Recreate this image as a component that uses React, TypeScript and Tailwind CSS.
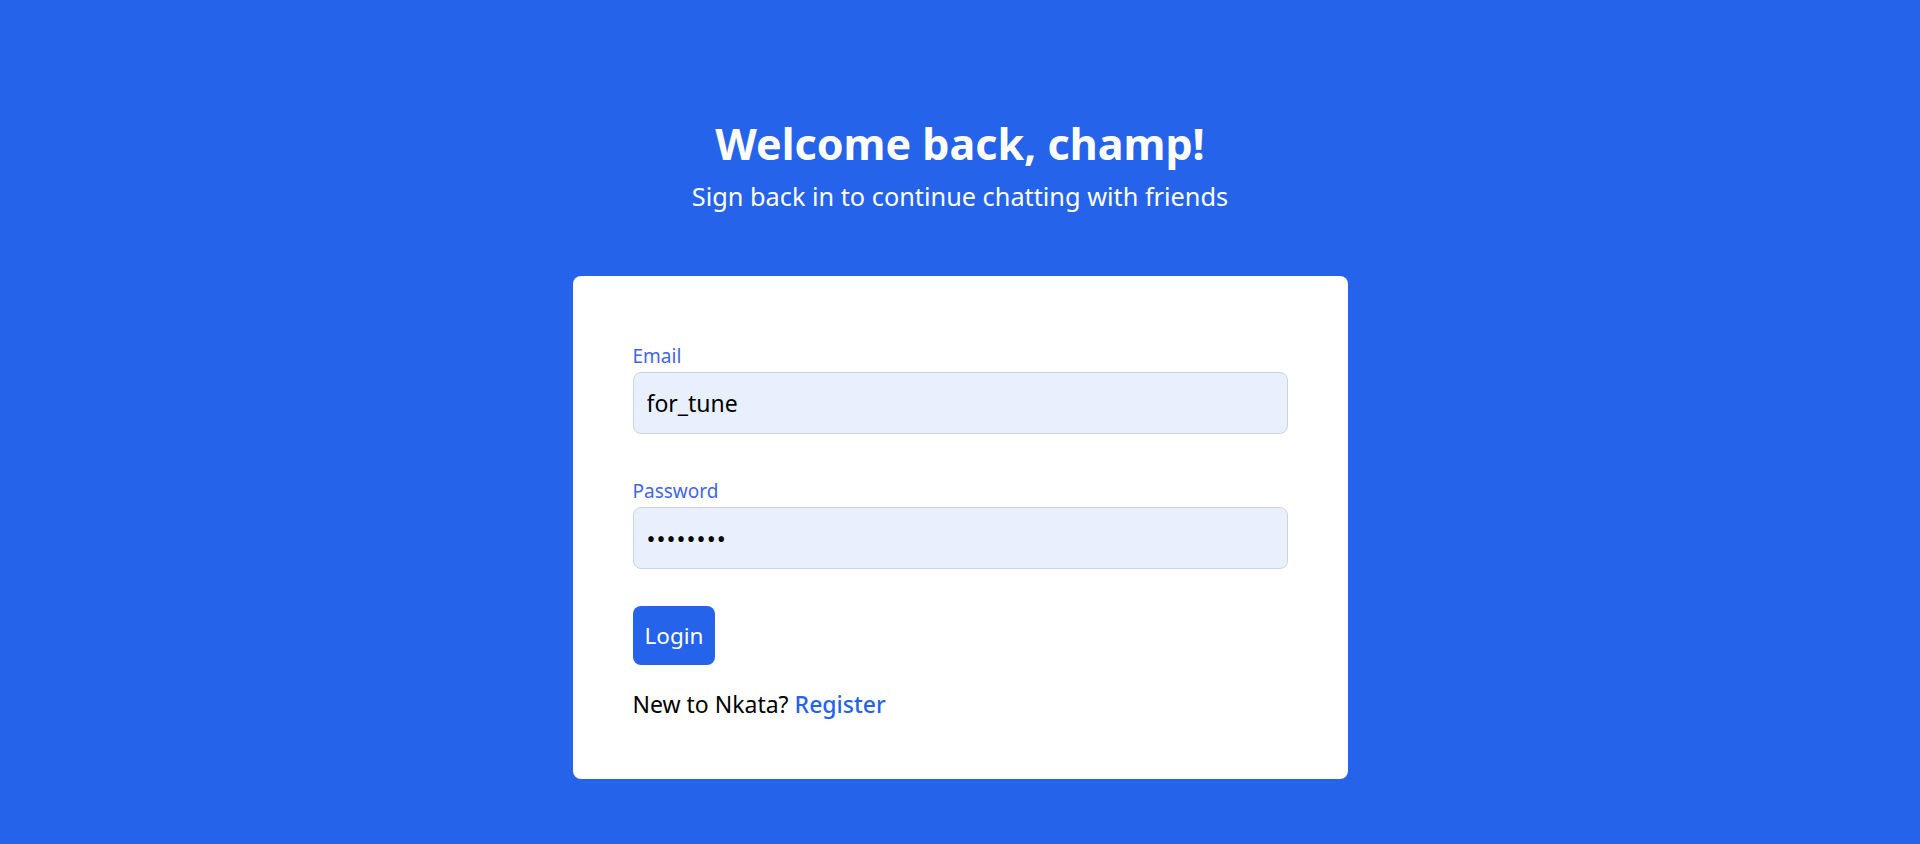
export default function App() {
  return (
    <main
      className="min-h-screen w-full bg-[#2563eb] flex flex-col items-center pt-[116px]"
      style={{ fontFamily: '"Noto Sans", "Open Sans", sans-serif' }}
    >
      <h1 className="text-[43px] font-bold leading-[56px] text-white">Welcome back, champ!</h1>
      <p className="mt-[6px] text-[25.3px] leading-[36px] text-white">
        Sign back in to continue chatting with friends
      </p>

      <div className="mt-[62px] w-[775px] rounded-lg bg-white px-[60px] pt-[66px] pb-[59px]">
        <form onSubmit={(e) => e.preventDefault()}>
          <label className="block text-[19px] leading-[28px] text-[#3f66ea]">Email</label>
          <input
            type="text"
            defaultValue="for_tune"
            className="mt-[2px] block h-[62px] w-full rounded-lg border border-[#cfd4dc] bg-[#e8f0fe] px-[13px] text-[23px] text-black outline-none"
          />

          <label className="mt-[43px] block text-[19px] leading-[28px] text-[#3f66ea]">Password</label>
          <input
            type="password"
            defaultValue="password"
            className="mt-[2px] block h-[62px] w-full rounded-lg border border-[#cfd4dc] bg-[#e8f0fe] px-[13px] text-[24px] tracking-[1px] text-black outline-none"
          />

          <button
            type="submit"
            className="mt-[37px] block h-[59px] rounded-lg bg-[#2563eb] px-[12px] text-[22.5px] text-white"
          >
            Login
          </button>

          <p className="mt-[23px] text-[23px] leading-[32px] text-black">
            New to Nkata?{' '}
            <a href="#" className="font-medium text-[#2563eb]">
              Register
            </a>
          </p>
        </form>
      </div>
    </main>
  );
}
